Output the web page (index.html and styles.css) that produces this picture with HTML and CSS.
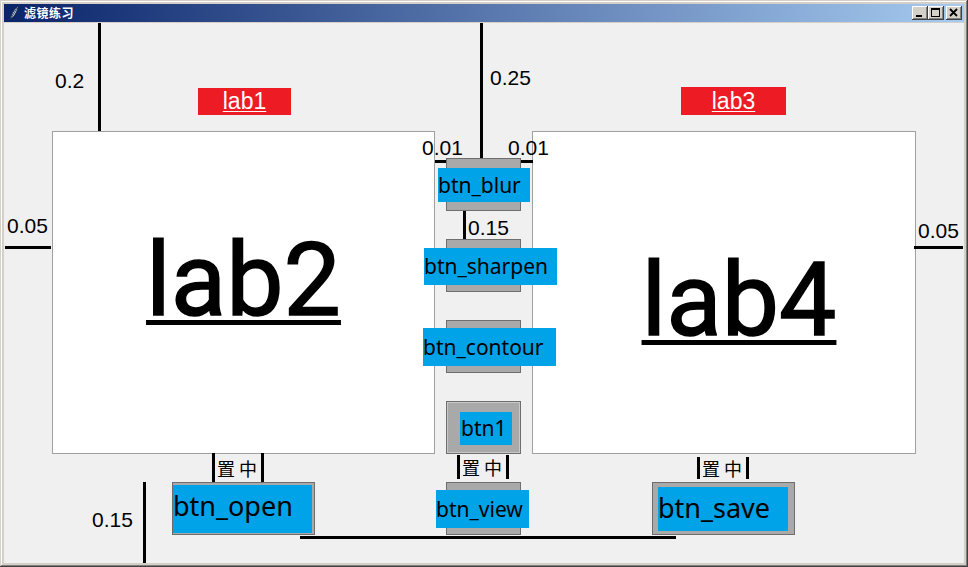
FILE: index.html
```html
<!DOCTYPE html>
<html lang="zh">
<head>
<meta charset="utf-8">
<title>滤镜练习</title>
<link rel="stylesheet" href="styles.css">
</head>
<body>
<div class="window">
  <div class="titlebar">
    <svg class="tk-icon" width="12" height="16" viewBox="0 0 12 16">
      <path d="M2 15 C3 10 6 4 10 1 C10 5 7 11 3 14 Z" fill="#d8e8f8" stroke="#20304a" stroke-width="1"/>
      <path d="M2 15 L9 3" stroke="#20304a" stroke-width="0.8"/>
    </svg>
    <span class="title">滤镜练习</span>
    <div class="controls">
      <span class="ctl"><svg width="16" height="14" viewBox="0 0 16 14"><rect x="4" y="9" width="6" height="2" fill="#000"/></svg></span>
      <span class="ctl"><svg width="16" height="14" viewBox="0 0 16 14"><rect x="3.5" y="2.5" width="8" height="8" fill="none" stroke="#000"/><rect x="3" y="2" width="9" height="2" fill="#000"/></svg></span>
      <span class="ctl close"><svg width="16" height="14" viewBox="0 0 16 14"><path d="M4 3 L11 10 M11 3 L4 10" stroke="#000" stroke-width="1.8"/></svg></span>
    </div>
  </div>
  <div class="client">
    <div class="top-row">
      <div class="redlab lab1"><span>lab1</span></div>
      <div class="redlab lab3"><span>lab3</span></div>
    </div>
    <div class="main-row">
      <div class="panel lab2"><span>lab2</span></div>
      <div class="mid">
        <div class="tbtn"><span class="blue b-blur">btn_blur</span></div>
        <div class="tbtn"><span class="blue b-sharpen">btn_sharpen</span></div>
        <div class="tbtn"><span class="blue b-contour">btn_contour</span></div>
        <div class="tbtn sunk"><span class="blue b-one">btn1</span></div>
      </div>
      <div class="panel lab4"><span>lab4</span></div>
    </div>
    <div class="bottom-row">
      <div class="bbtn b-open-wrap"><span class="blue big b-open">btn_open</span></div>
      <div class="tbtn b-view-wrap"><span class="blue b-view">btn_view</span></div>
      <div class="bbtn b-save-wrap"><span class="blue big b-save">btn_save</span></div>
    </div>

    <div class="vline v1"></div>
    <div class="vline v2"></div>
    <div class="vline v3"></div>
    <div class="vline v4"></div>
    <div class="hline h1"></div>
    <div class="hline h2"></div>
    <div class="hline h3"></div>
    <div class="hline h4"></div>
    <div class="hline h5"></div>

    <span class="num n1">0.2</span>
    <span class="num n2">0.25</span>
    <span class="num n3">0.05</span>
    <span class="num n4">0.05</span>
    <span class="num n5">0.01</span>
    <span class="num n6">0.01</span>
    <span class="num n7">0.15</span>
    <span class="num n8">0.15</span>

    <div class="tag t1"><span class="txt">置中</span></div>
    <div class="tag t2"><span class="txt">置中</span></div>
    <div class="tag t3"><span class="txt">置中</span></div>
  </div>
</div>
</body>
</html>
```
FILE: styles.css
```css
* { box-sizing: border-box; }
html, body { margin: 0; padding: 0; }
body { width: 968px; height: 567px; overflow: hidden; background: #d4d0c8; font-family: "Noto Sans", sans-serif; }

.window {
  width: 968px; height: 567px;
  padding: 4px 4px 4px 4px;
  background: #d4d0c8;
  box-shadow: inset -1px -1px #404040, inset 1px 1px #d4d0c8, inset -2px -2px #808080, inset 2px 2px #ffffff;
  display: flex; flex-direction: column;
}

.titlebar {
  height: 18px; margin-bottom: 1px;
  background: linear-gradient(to right, #0a246a, #a6caf0);
  display: flex; align-items: center;
  padding: 0 2px 0 4px;
}
.tk-icon { display: block; }
.title {
  margin-left: 4px; color: #fff; font-weight: bold; font-size: 12px;
  font-family: "Noto Sans CJK SC", sans-serif; letter-spacing: 0.5px; line-height: 18px;
}
.controls { margin-left: auto; display: flex; }
.ctl {
  width: 16px; height: 14px; background: #d4d0c8; display: block;
  box-shadow: inset -1px -1px #404040, inset 1px 1px #ffffff, inset -2px -2px #808080, inset 2px 2px #d4d0c8;
}
.ctl svg { display: block; }
.ctl.close { margin-left: 2px; }

.client {
  position: relative; width: 960px; height: 540px; background: #f0f0f0;
  display: flex; flex-direction: column;
}

.top-row { height: 108px; display: flex; align-items: flex-start; flex: none; }
.redlab {
  background: #ed1c24; color: #fff; display: flex; align-items: center; justify-content: center;
  font-family: "Liberation Sans", sans-serif; font-size: 23px; line-height: 1;
  text-decoration: underline; text-decoration-thickness: 1px; text-underline-offset: 2px;
}
.lab1 { width: 93px; height: 27px; margin: 65px 0 0 194px; }
.lab3 { width: 105px; height: 28px; margin: 64px 0 0 390px; }

.main-row { height: 323px; margin-left: 48px; display: flex; flex: none; }
.panel {
  background: #fff; border: 1px solid #a0a0a0;
  display: flex; justify-content: center; align-items: flex-start;
  font-family: Roboto, sans-serif; font-size: 102px; line-height: 102px; color: #000;
  -webkit-text-stroke: 1.5px #000;
  text-decoration: underline; text-decoration-thickness: 5px; text-underline-offset: 5px;
}
.lab2 { width: 383px; padding-top: 97px; }
.lab4 { width: 384px; padding-top: 117px; padding-left: 30px; }

.mid {
  width: 97px; display: flex; flex-direction: column; gap: 28px;
  padding: 27px 0 0 11px;
  position: relative; z-index: 1;
}
.tbtn {
  width: 75px; height: 53px; flex: none;
  border: 1px solid #6e6e6e; background: #a9a9a9;
  display: flex; align-items: center;
}
.tbtn.sunk { box-shadow: inset 1px 1px #c8c8c8, inset -1px -1px #c8c8c8; }
.blue {
  flex: none; background: #00a2e8; color: #000; white-space: nowrap;
  font-family: "Noto Sans", sans-serif; font-size: 21px;
}
.b-blur { width: 92px; height: 34px; line-height: 34px; margin-left: -9px; }
.b-sharpen { width: 133px; height: 37px; line-height: 37px; margin-left: -23px; margin-top: 2px; }
.b-contour { width: 133px; height: 38px; line-height: 38px; margin-left: -24px; margin-top: 1px; }
.b-one { width: 52px; height: 33px; line-height: 33px; margin-left: 13px; padding-left: 1px; margin-top: 2px; }
.b-view { width: 93px; height: 38px; line-height: 38px; margin-left: -11px; }

.bottom-row { flex: 1; display: flex; align-items: flex-start; padding-top: 28px; }
.bbtn {
  width: 143px; height: 53px; flex: none;
  border: 1px solid #6e6e6e; background: #a9a9a9;
  display: flex; align-items: flex-start;
}
.big { font-size: 27px; }
.b-open-wrap { margin-left: 168px; }
.b-view-wrap { margin-left: 131px; }
.b-save-wrap { margin-left: 131px; }
.b-open { width: 139px; height: 48px; line-height: 41px; margin-top: 2px; }
.b-save { width: 130px; height: 44px; line-height: 41px; margin: 4px 0 0 5px; }

.vline { position: absolute; width: 3px; background: #000; z-index: 2; }
.hline { position: absolute; height: 3px; background: #000; z-index: 2; }
.v1 { left: 94px; top: 0; height: 108px; }
.v2 { left: 476px; top: 0; height: 135px; }
.v3 { left: 459px; top: 188px; height: 28px; }
.v4 { left: 139px; top: 459px; height: 81px; }
.h1 { left: 1px; top: 223px; width: 46px; }
.h2 { left: 910px; top: 223px; width: 49px; }
.h3 { left: 431px; top: 137px; width: 11px; }
.h4 { left: 517px; top: 137px; width: 12px; }
.h5 { left: 296px; top: 513px; width: 376px; }

.num {
  position: absolute; z-index: 2; font-family: "Liberation Sans", sans-serif; font-size: 21px; line-height: 21px; color: #000;
  white-space: nowrap;
}
.n1 { left: 51px; top: 47px; }
.n2 { left: 486px; top: 44px; }
.n3 { left: 3px; top: 192px; }
.n4 { left: 914px; top: 197px; }
.n5 { left: 418px; top: 114px; }
.n6 { left: 504px; top: 114px; }
.n7 { left: 464px; top: 194px; }
.n8 { left: 88px; top: 486px; }

.tag {
  position: absolute; z-index: 2; display: flex; align-items: center;
  border-left: 3px solid #000; border-right: 3px solid #000;
}
.tag .txt {
  padding-left: 2px; letter-spacing: 4px;
  font-family: "Noto Sans CJK SC", sans-serif; font-size: 18px; line-height: 18px; color: #000;
}
.t1 { left: 208px; top: 430px; height: 29px; }
.t2 { left: 453px; top: 432px; height: 24px; }
.t3 { left: 693px; top: 434px; height: 22px; }
```
